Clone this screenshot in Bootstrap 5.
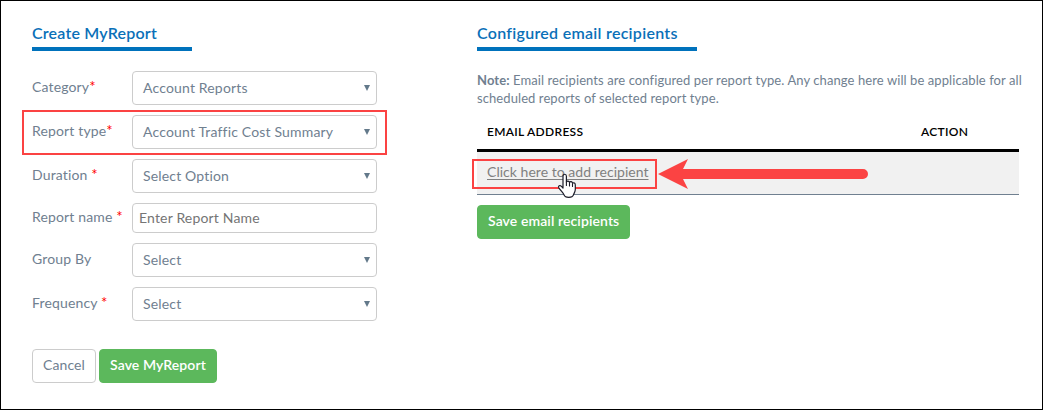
<!DOCTYPE html>
<html lang="en">
<head>
    <meta charset="UTF-8">
    <meta name="viewport" content="width=device-width, initial-scale=1.0">
    <title>Create MyReport</title>

    <link rel="stylesheet" href="https://cdn.jsdelivr.net/npm/bootstrap@5.3.0/dist/css/bootstrap.min.css">

    <style>
        body { font-family: "Lato", sans-serif; font-size: 14px; line-height: 20px; color: #708090; background: #fff; }
        .page { width: 1043px; height: 410px; border: 1px solid #000; padding: 20px 23px 0 31px; }
        .left-col { width: 445px; }
        .right-col { width: 542px; }

        .section-title { color: #0a70b8; font-size: 16px; font-weight: 600; line-height: 22px; letter-spacing: .28px; padding: 1px 20px 3px 0; border-bottom: 4px solid #0072bc; margin-bottom: 20px; }
        .title-create { width: 160px; letter-spacing: .2px; }
        .title-recipients { width: 220px; }

        /* report form */
        .form-line { width: 345px; margin-bottom: 10px; position: relative; }
        .field-label { width: 100px; letter-spacing: .15px; white-space: pre; padding-bottom: 2px; }
        .field-label span { color: #f00; font-size: 15px; line-height: 1; }
        .field { width: 245px; height: 34px; border: 1px solid #ccc; border-radius: 4px; padding: 0 6px 0 10px; letter-spacing: .17px; background: #fff; }
        .field-input { height: 30px; padding: 0 6px; color: #757575; }
        .field svg { width: 6px; height: 6px; fill: #63798a; }
        .outline-red { position: absolute; border: 2px solid #fb4343; }
        .outline-type { left: -10px; top: -5px; width: 365px; height: 45px; }

        .form-actions { margin-top: 28px; gap: 3px; }
        .btn-form { height: 34px; padding: 0 10px 2px; font-size: 14px; line-height: 30px; border-radius: 4px; letter-spacing: .1px; }
        .btn-plain { border: 1px solid #ccc; color: #708090; width: 64px; }
        .btn-green, .btn-green:hover { background: #5cb85c; border: 1px solid #5cb85c; color: #fff; font-weight: 600; }
        .btn-save { width: 118px; }
        .btn-recipients { width: 153px; margin-top: 10px; }

        /* recipients */
        .note { font-size: 13px; line-height: 18px; letter-spacing: .085px; white-space: nowrap; }
        .list-head { color: #000; font-size: 12px; font-weight: 600; height: 45px; border-bottom: 3px solid #000; padding: 8px 10px 0; letter-spacing: .3px; }
        .head-action { width: 88px; }
        .list-line { height: 43px; background: #f1f1f1; border-bottom: 1px solid #708090; padding: 0 10px 2px; position: relative; }
        .add-link, .add-link:hover { color: #808080; letter-spacing: .03px; text-decoration: underline; text-underline-offset: 2px; }
        .outline-link { left: -5px; top: 7px; width: 185px; height: 30px; }
        .arrow { position: absolute; left: 180px; top: 6px; width: 212px; height: 32px; }
        .hand { position: absolute; left: 80px; top: 21px; width: 20px; height: 26px; }
    </style>
</head>
<body>

    <div class="page d-flex">
        <div class="left-col">
            <h1 class="section-title title-create text-nowrap">Create MyReport</h1>

            <div class="form-line d-flex align-items-center">
                <div class="field-label">Category<span>*</span></div>
                <div class="field d-flex align-items-center justify-content-between">
                    <span>Account Reports</span>
                    <svg viewBox="0 0 7 7"><path d="M0 0h7L3.5 7z"/></svg>
                </div>
            </div>
            <div class="form-line d-flex align-items-center">
                <div class="outline-red outline-type"></div>
                <div class="field-label">Report type<span>*</span></div>
                <div class="field d-flex align-items-center justify-content-between">
                    <span>Account Traffic Cost Summary</span>
                    <svg viewBox="0 0 7 7"><path d="M0 0h7L3.5 7z"/></svg>
                </div>
            </div>
            <div class="form-line d-flex align-items-center">
                <div class="field-label">Duration <span>*</span></div>
                <div class="field d-flex align-items-center justify-content-between">
                    <span>Select Option</span>
                    <svg viewBox="0 0 7 7"><path d="M0 0h7L3.5 7z"/></svg>
                </div>
            </div>
            <div class="form-line d-flex align-items-center">
                <div class="field-label">Report name <span>*</span></div>
                <div class="field field-input d-flex align-items-center">
                    <span>Enter Report Name</span>
                </div>
            </div>
            <div class="form-line d-flex align-items-center">
                <div class="field-label">Group By</div>
                <div class="field d-flex align-items-center justify-content-between">
                    <span>Select</span>
                    <svg viewBox="0 0 7 7"><path d="M0 0h7L3.5 7z"/></svg>
                </div>
            </div>
            <div class="form-line d-flex align-items-center">
                <div class="field-label">Frequency <span>*</span></div>
                <div class="field d-flex align-items-center justify-content-between">
                    <span>Select</span>
                    <svg viewBox="0 0 7 7"><path d="M0 0h7L3.5 7z"/></svg>
                </div>
            </div>

            <div class="d-flex form-actions">
                <button type="button" class="btn btn-form btn-plain text-nowrap">Cancel</button>
                <button type="button" class="btn btn-form btn-green btn-save text-nowrap">Save MyReport</button>
            </div>
        </div>

        <div class="right-col">
            <h2 class="section-title title-recipients text-nowrap">Configured email recipients</h2>

            <p class="note mb-0"><b>Note:</b> Email recipients are configured per report type. Any change here will be applicable for all<br>scheduled reports of selected report type.</p>

            <div class="list-head d-flex align-items-center justify-content-between">
                <div>EMAIL ADDRESS</div>
                <div class="head-action">ACTION</div>
            </div>
            <div class="list-line d-flex align-items-center">
                <a href="#" class="add-link">Click here to add recipient</a>
                <div class="outline-red outline-link"></div>
                <svg class="arrow" viewBox="0 0 212 32">
                    <path d="M1 16L31 1l-5 10h180a5 5 0 0 1 0 10H26l5 10z" fill="#fb4343"/>
                </svg>
                <svg class="hand" viewBox="0 0 20 26">
                    <path d="M6 3.2C6 .6 9.400 .6 9.400 3.200V9C10 7.800 12 7.800 12.500 9.300C13.300 8.200 15 8.500 15.500 10C17 9.400 18.300 10.200 18.300 12V16.500C18.300 19 17 20 16.300 22.200C15.500 25 8 25 7.200 22.200C6.500 20 4 18 1.800 14.800C.8 13 2.800 11.800 4.200 13.200L6 15z" fill="#fff" stroke="#1c1c28" stroke-width="1.2" stroke-linejoin="round"/>
                    <path d="M9.400 9v3.500M12.500 9.500v3.500M15.500 10.500v3" stroke="#1c1c28" stroke-width="1.100" stroke-linecap="round"/>
                </svg>
            </div>

            <button type="button" class="btn btn-form btn-green btn-recipients text-nowrap">Save email recipients</button>
        </div>
    </div>

    <script src="https://cdn.jsdelivr.net/npm/bootstrap@5.3.0/dist/js/bootstrap.bundle.min.js"></script>
</body>
</html>
